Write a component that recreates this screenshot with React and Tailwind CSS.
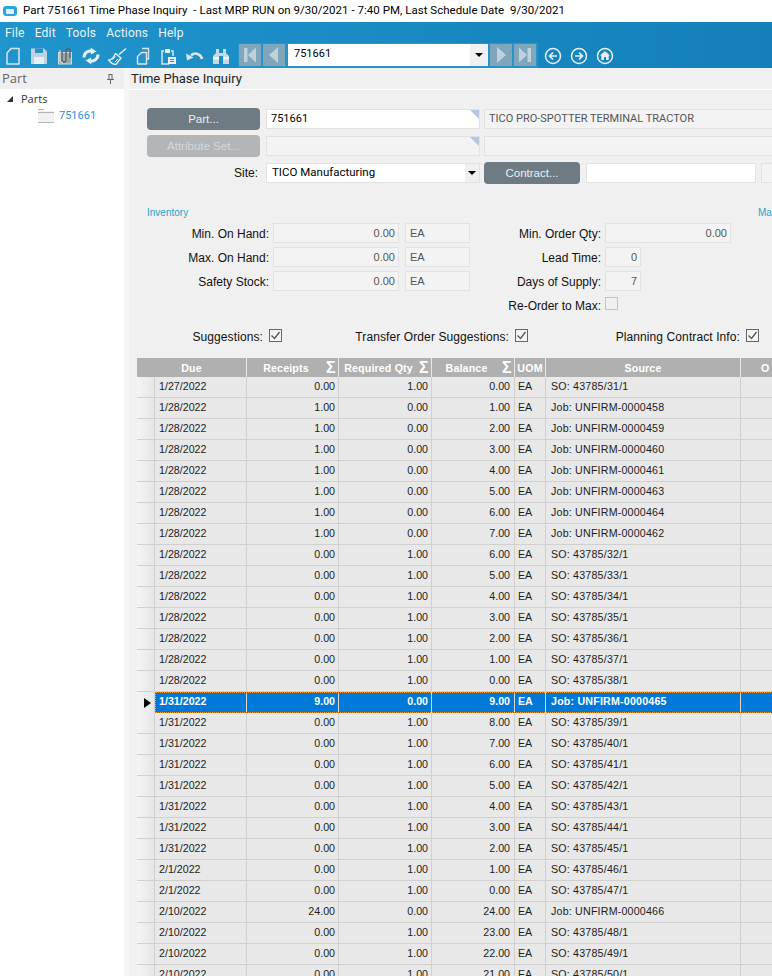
import React from "react";

const SANS = "font-['Liberation_Sans',Arial,sans-serif]";
const UI = "font-['Open_Sans','Noto_Sans',sans-serif]";
const RB = "font-['Roboto','Noto_Sans',sans-serif]";

const rows = [
  ["1/27/2022","0.00","1.00","0.00","SO: 43785/31/1"],
  ["1/28/2022","1.00","0.00","1.00","Job: UNFIRM-0000458"],
  ["1/28/2022","1.00","0.00","2.00","Job: UNFIRM-0000459"],
  ["1/28/2022","1.00","0.00","3.00","Job: UNFIRM-0000460"],
  ["1/28/2022","1.00","0.00","4.00","Job: UNFIRM-0000461"],
  ["1/28/2022","1.00","0.00","5.00","Job: UNFIRM-0000463"],
  ["1/28/2022","1.00","0.00","6.00","Job: UNFIRM-0000464"],
  ["1/28/2022","1.00","0.00","7.00","Job: UNFIRM-0000462"],
  ["1/28/2022","0.00","1.00","6.00","SO: 43785/32/1"],
  ["1/28/2022","0.00","1.00","5.00","SO: 43785/33/1"],
  ["1/28/2022","0.00","1.00","4.00","SO: 43785/34/1"],
  ["1/28/2022","0.00","1.00","3.00","SO: 43785/35/1"],
  ["1/28/2022","0.00","1.00","2.00","SO: 43785/36/1"],
  ["1/28/2022","0.00","1.00","1.00","SO: 43785/37/1"],
  ["1/28/2022","0.00","1.00","0.00","SO: 43785/38/1"],
  ["1/31/2022","9.00","0.00","9.00","Job: UNFIRM-0000465"],
  ["1/31/2022","0.00","1.00","8.00","SO: 43785/39/1"],
  ["1/31/2022","0.00","1.00","7.00","SO: 43785/40/1"],
  ["1/31/2022","0.00","1.00","6.00","SO: 43785/41/1"],
  ["1/31/2022","0.00","1.00","5.00","SO: 43785/42/1"],
  ["1/31/2022","0.00","1.00","4.00","SO: 43785/43/1"],
  ["1/31/2022","0.00","1.00","3.00","SO: 43785/44/1"],
  ["1/31/2022","0.00","1.00","2.00","SO: 43785/45/1"],
  ["2/1/2022","0.00","1.00","1.00","SO: 43785/46/1"],
  ["2/1/2022","0.00","1.00","0.00","SO: 43785/47/1"],
  ["2/10/2022","24.00","0.00","24.00","Job: UNFIRM-0000466"],
  ["2/10/2022","0.00","1.00","23.00","SO: 43785/48/1"],
  ["2/10/2022","0.00","1.00","22.00","SO: 43785/49/1"],
  ["2/10/2022","0.00","1.00","21.00","SO: 43785/50/1"],
];

function Ic({ children, w = 18, h = 18, className = "" }) {
  return (
    <svg width={w} height={h} viewBox={`0 0 ${w} ${h}`} className={"block shrink-0 " + className}>
      {children}
    </svg>
  );
}

const LINE = "#d5e5ee";
const toolIcons = [
  <Ic key="n" w={26}><path d="M11 1.500h8v15.500H7V6z" fill="none" stroke={LINE} strokeWidth="1.5" strokeLinejoin="round"/></Ic>,
  <Ic key="s" w={26}><path d="M5 1.500h13l3 3V17H5z" fill="#bdd3df"/><rect x="9" y="1.500" width="8" height="4.500" fill="#2a92c6"/><rect x="8" y="10" width="10" height="7" fill="#e7eff4"/></Ic>,
  <Ic key="a" w={26}><rect x="6.500" y="5.500" width="13" height="11.500" fill="#9ea6a6" stroke="#d0dadd"/><path d="M10 4v9a2 2 0 0 0 4 0V3.500a2 2 0 0 1 4 0V11" fill="none" stroke="#55626a" strokeWidth="1.300"/><path d="M8 3v10a3 3 0 0 0 3 3" fill="none" stroke="#dfe6ea" strokeWidth="1"/></Ic>,
  <Ic key="r" w={26}><path d="M6 10.500a6.500 6.500 0 0 1 9-6" fill="none" stroke="#e6eff4" strokeWidth="3"/><path d="M12.500 .5l6 4-5.500 3z" fill="#e6eff4"/><path d="M20 7.500a6.500 6.500 0 0 1-9 6" fill="none" stroke="#e6eff4" strokeWidth="3"/><path d="M13.500 17.500l-6-4 5.500-3z" fill="#e6eff4"/></Ic>,
  <Ic key="b" w={26}><path d="M22 1.500l-7 6" stroke="#e6eff4" strokeWidth="1.600"/><path d="M11.500 6.500l5.500 4.500-5 6.500c-2 0-5.500-2-7.500-4.500 3 0 5.500-3 7-6.500z" fill="none" stroke="#e6eff4" strokeWidth="1.400" strokeLinejoin="round"/><path d="M8.500 12.500l3-3M11 15l3-3" stroke="#e6eff4" strokeWidth="1"/></Ic>,
  <Ic key="c" w={26}><path d="M12 1.500h6.500V12h-2" fill="none" stroke={LINE} strokeWidth="1.400"/><path d="M11.500 5.500h5v11.500H7.500V9.500z" fill="#2a92c6" stroke={LINE} strokeWidth="1.400" strokeLinejoin="round"/></Ic>,
  <Ic key="p" w={26}><path d="M8 4H6v13h7M17 9V4h-2" fill="none" stroke={LINE} strokeWidth="1.500"/><rect x="9" y="2" width="5" height="4" fill="#e6eff4"/><rect x="12" y="10" width="8" height="7" fill="#e6eff4"/><path d="M14 12.500h4M14 14.500h4" stroke="#2a92c6"/></Ic>,
  <Ic key="u" w={25}><path d="M9 8.500a6.500 6.500 0 0 1 11 3.500" fill="none" stroke="#d8e5ec" strokeWidth="2.600"/><path d="M4 6.500l1 7 6.500-3z" fill="#d8e5ec"/></Ic>,
  <Ic key="f" w={28}><path d="M9 2h3v4h4V2h3v4l3 3v8h-6V9h-4v8H6V9l3-3z" fill="#c8d8e0"/><rect x="6" y="10" width="6" height="2.500" fill="#eef4f7"/><rect x="16" y="10" width="6" height="2.500" fill="#eef4f7"/></Ic>,
];

function NavBtn({ kind }) {
  const G = "#bed1dc";
  const glyph = {
    first: <><rect x="5" y="4" width="3.500" height="14" fill={G}/><path d="M17 3.500v15L9 11z" fill={G}/></>,
    prev: <path d="M15 3v16L6 11z" fill={G}/>,
    next: <path d="M7 3v16l9-8z" fill={G}/>,
    last: <><path d="M5 3.500v15l8-7.500z" fill={G}/><rect x="13.500" y="4" width="3.500" height="14" fill={G}/></>,
  }[kind];
  return (
    <div className="w-[22px] h-[22px] bg-[#7fa6bb] shrink-0">
      <Ic w={22} h={22}>{glyph}</Ic>
    </div>
  );
}

function Circle({ children }) {
  return (
    <Ic w={18} h={18}>
      <circle cx="9" cy="9" r="7.500" fill="none" stroke="#e6f0f5" strokeWidth="1.500"/>
      {children}
    </Ic>
  );
}

function Corner() {
  return <span className="absolute right-0 top-0 w-0 h-0 border-l-[9px] border-l-transparent border-t-[9px] border-t-[#b4c7df]" />;
}

function Box({ className = "", children, align = "left" }) {
  return (
    <div className={`relative h-[20px] border border-[#e2e2e2] bg-[#f3f3f3] text-[#555] flex items-center shrink-0 ${align === "right" ? "justify-end pr-[3px]" : "pl-[4px]"} ${className}`}>
      {children}
    </div>
  );
}

function GreyBtn({ children, disabled, className = "" }) {
  return (
    <div className={`h-[22px] pt-[2px] rounded-[4px] flex items-center justify-center shrink-0 text-[11.500px] ${disabled ? "bg-[#b2b6b9] text-[#d4d7d9]" : "bg-[#6e7b83] text-[#eef0f1]"} ${className}`}>
      {children}
    </div>
  );
}

function Check() {
  return (
    <div className="w-[13px] h-[13px] border border-[#666] bg-[#f3f3f3] shrink-0">
      <svg width="11" height="11" viewBox="0 0 11 11" className="block">
        <path d="M1.500 5.500l3 3 5-6.500" fill="none" stroke="#555" strokeWidth="1.300"/>
      </svg>
    </div>
  );
}

function Row({ label, lw, children }) {
  return (
    <div className="flex items-center h-[20px] mb-[4px]">
      <div style={{ width: lw }} className="text-right text-[12px] pt-[1px] text-[#111] shrink-0 whitespace-nowrap">{label}</div>
      <div className="flex ml-[4px] items-center">{children}</div>
    </div>
  );
}

function HeadCell({ w, children, sigma }) {
  return (
    <div style={{ width: w }} className="shrink-0 h-full border-r border-[#e8e8e8] flex items-center text-white font-bold text-[10.670px] tracking-[0.15px]">
      <div className="flex-1 text-center whitespace-nowrap">{children}</div>
      {sigma && <span className="text-[16px] leading-none mr-[1px] w-[12px] text-center">Σ</span>}
    </div>
  );
}

function GridRow({ r, selected }) {
  const cell = selected
    ? "border-r border-[#d8d8d8] h-full flex items-center shrink-0 pb-[3px]"
    : "border-r border-[#d0d0d0] h-full flex items-center shrink-0 pb-[2px]";
  return (
    <div className={`flex h-[21px] ${selected ? "bg-[#0078d7] text-white font-bold" : "bg-[#e8e8e8] text-[#1c1c1c] border-b border-[#d0d0d0]"}`}>
      <div className="w-[18px] shrink-0 h-full bg-gradient-to-r from-[#f4f4f4] to-[#e6e6e6] border-r border-[#d0d0d0] flex items-center justify-center">
        {selected && (
          <svg width="7" height="10" viewBox="0 0 7 10" className="block ml-[3px]"><path d="M0 0l7 5-7 5z" fill="#000"/></svg>
        )}
      </div>
      <div className={`flex flex-1 h-full ${selected ? "outline-1 outline-dotted outline-[#f39a2e] -outline-offset-1" : ""}`}>
        <div className={`${cell} w-[92px] pl-[4px]`}>{r[0]}</div>
        <div className={`${cell} w-[92px] justify-end pr-[3px]`}>{r[1]}</div>
        <div className={`${cell} w-[93px] justify-end pr-[3px]`}>{r[2]}</div>
        <div className={`${cell} w-[83px] justify-end pr-[4px]`}>{r[3]}</div>
        <div className={`${cell} w-[31px] pl-[3px]`}>EA</div>
        <div className={`${cell} w-[195px] pl-[5px] tracking-[0.2px]`}>{r[4]}</div>
        <div className={`${cell} w-[60px]`}></div>
      </div>
    </div>
  );
}

export default function App() {
  return (
    <div className={`w-[772px] h-[976px] overflow-hidden bg-white flex flex-col ${SANS}`}>
      {/* Title bar */}
      <div className={`h-[22px] shrink-0 flex items-center pl-[3px] text-[11.500px] tracking-[0.03px] text-black whitespace-pre ${RB}`}>
        <span className="w-[14px] h-[10px] rounded-[3px] bg-[#2aa5e0] flex items-center justify-center mr-[6px]">
          <span className="w-[8px] h-[5px] rounded-[1px] bg-[#dff3fc]" />
        </span>
        <span>Part 751661 Time Phase Inquiry  - Last MRP RUN on 9/30/2021 - 7:40 PM, Last Schedule Date  9/30/2021</span>
      </div>

      {/* Blue ribbon */}
      <div className="h-[46px] shrink-0 bg-gradient-to-r from-[#2094cc] to-[#1380ba] flex flex-col">
        <div className={`h-[21px] flex items-center pl-[5px] gap-[10px] text-[12px] tracking-[0.2px] text-[#eaf4f9] ${RB}`}>
          <span>File</span><span>Edit</span><span>Tools</span><span>Actions</span><span>Help</span>
        </div>
        <div className="flex items-center h-[25px]">
          <div className="flex items-center w-[238px]">{toolIcons}</div>
          <div className="h-[25px] w-[300px] bg-[#2893c6] flex items-center pl-[1px] gap-[2px] pb-[2px]">
            <NavBtn kind="first" />
            <NavBtn kind="prev" />
            <div className={`w-[200px] h-[22px] ml-[1px] bg-white flex items-center pl-[6px] text-[11px] text-black ${RB}`}>
              <span className="flex-1">751661</span>
              <span className="w-[18px] h-full bg-[#f0f0f0] flex items-center justify-center">
                <span className="w-0 h-0 border-l-[4px] border-r-[4px] border-t-[4px] border-l-transparent border-r-transparent border-t-black" />
              </span>
            </div>
            <NavBtn kind="next" />
            <NavBtn kind="last" />
          </div>
          <div className="flex items-center ml-[6px] gap-[8px]">
            <Circle><path d="M13 9H6M9 5.500L5.500 9 9 12.500" fill="none" stroke="#e6f0f5" strokeWidth="1.700"/></Circle>
            <Circle><path d="M5 9h7M9 5.500L12.500 9 9 12.500" fill="none" stroke="#e6f0f5" strokeWidth="1.700"/></Circle>
            <Circle><path d="M9 4l5 4.500h-1.300V13H5.300V8.500H4z" fill="#e6f0f5"/><rect x="8" y="10" width="2" height="3" fill="#1a86bf"/></Circle>
          </div>
        </div>
      </div>

      {/* Body */}
      <div className="flex flex-1 min-h-0">
        {/* Left tree panel */}
        <div className="w-[124px] shrink-0 flex flex-col bg-white">
          <div className={`h-[21px] bg-[#efefef] flex items-center pl-[2px] pr-[9px] justify-between text-[13px] text-[#666] ${UI}`}>
            <span>Part</span>
            <svg width="9" height="10" viewBox="0 0 9 10" className="block"><path d="M2.500 .5h4M3 1v4.500M6 1v4.500M1 5.500h7M4.500 6v4" fill="none" stroke="#666" strokeWidth="1"/></svg>
          </div>
          <div className={`flex items-center h-[12px] mt-[4px] pl-[7px] text-[11px] text-[#333] ${UI}`}>
            <svg width="6" height="6" viewBox="0 0 6 6" className="block"><path d="M6 0v6H0z" fill="#333"/></svg>
            <span className="ml-[8px]">Parts</span>
          </div>
          <div className={`flex items-center mt-[3px] pl-[38px] h-[16px] text-[11px] text-[#2a8fe8] ${RB}`}>
            <svg width="16" height="14" viewBox="0 0 16 14" className="block">
              <path d="M0 1h6l1 1h9v12H0z" fill="#f1f1f1"/>
              <path d="M0 .5h6M0 3.500h16M0 13.500h16" stroke="#b5b5b5" strokeWidth="1"/>
            </svg>
            <span className="ml-[5px]">751661</span>
          </div>
        </div>

        {/* Splitter */}
        <div className="w-[5px] shrink-0 bg-[#f5f5f5]" />

        {/* Main */}
        <div className="flex-1 min-w-0 bg-[#f0f0f0] flex flex-col overflow-hidden">
          <div className={`h-[21px] shrink-0 flex items-center pl-[2px] text-[13px] text-[#222] ${RB}`}>Time Phase Inquiry</div>
          <div className="h-[1px] shrink-0 bg-white" />

          {/* Form */}
          <div className="h-[268px] shrink-0 pl-[18px] pt-[18px] text-[12px] w-[800px]">
            <div className="flex items-center h-[22px]">
              <GreyBtn className="w-[113px]">Part...</GreyBtn>
              <Box className="ml-[6px] w-[214px] !bg-white !text-black pt-[1px]"><span className={`text-[11px] ${RB}`}>751661</span><Corner /></Box>
              <Box className="ml-[4px] w-[400px] !text-[#555] pt-[1px]"><span className={`text-[11px] ${RB}`}>TICO PRO-SPOTTER TERMINAL TRACTOR</span></Box>
            </div>
            <div className="flex items-center h-[22px] mt-[5px]">
              <GreyBtn disabled className="w-[113px]">Attribute Set...</GreyBtn>
              <Box className="ml-[6px] w-[214px]"><Corner /></Box>
              <Box className="ml-[4px] w-[400px]" />
            </div>
            <div className="flex items-center h-[22px] mt-[5px]">
              <div className="w-[111px] text-right text-[12px] text-[#111]">Site:</div>
              <Box className="ml-[8px] w-[214px] !bg-white !text-black !pr-0">
                <span className={`flex-1 pl-[1px] text-[11.500px] ${RB}`}>TICO Manufacturing</span>
                <span className="w-[14px] h-full bg-[#f0f0f0] flex items-center justify-center">
                  <span className="w-0 h-0 border-l-[4px] border-r-[4px] border-t-[4px] border-l-transparent border-r-transparent border-t-black" />
                </span>
              </Box>
              <GreyBtn className="ml-[4px] w-[96px]">Contract...</GreyBtn>
              <Box className="ml-[6px] w-[170px] !bg-white" />
              <Box className="ml-[5px] w-[60px]" />
            </div>

            <div className="flex h-[10px] mt-[23px] pt-[1px] text-[10px] leading-[10px] text-[#2aa3cb] w-[625px] justify-between">
              <span>Inventory</span>
              <span className="w-[14px] overflow-hidden">Ma</span>
            </div>

            <div className="flex mt-[6px] text-[11px]">
              <div className="flex flex-col w-[323px]">
                {["Min. On Hand:","Max. On Hand:","Safety Stock:"].map((l) => (
                  <Row key={l} label={l} lw={122}>
                    <Box align="right" className="w-[126px]">0.00</Box>
                    <Box className="ml-[6px] w-[65px]">EA</Box>
                  </Row>
                ))}
              </div>
              <div className="flex flex-col">
                <Row label="Min. Order Qty:" lw={131}><Box align="right" className="w-[126px]">0.00</Box></Row>
                <Row label="Lead Time:" lw={131}><Box align="right" className="w-[36px]">0</Box></Row>
                <Row label="Days of Supply:" lw={131}><Box align="right" className="w-[36px]">7</Box></Row>
                <Row label="Re-Order to Max:" lw={131}>
                  <div className="w-[13px] h-[13px] border border-[#c4c4c4] bg-[#f0f0f0] mb-[3px]" />
                </Row>
              </div>
            </div>

            <div className="flex items-center h-[14px] mt-[11px] text-[12px] text-[#111] tracking-[0.1px] whitespace-nowrap">
              <span className="w-[116px] text-right">Suggestions:</span>
              <span className="ml-[6px] mb-[3px]"><Check /></span>
              <span className="w-[227px] text-right">Transfer Order Suggestions:</span>
              <span className="ml-[6px] mb-[3px]"><Check /></span>
              <span className="w-[212px] text-right">Planning Contract Info:</span>
              <span className="ml-[6px] mb-[3px]"><Check /></span>
            </div>
          </div>

          {/* Grid */}
          <div className="ml-[8px] w-[640px] text-[10.670px]">
            <div className="flex h-[19px] bg-[#b0b0b0]">
              <HeadCell w={110}>Due</HeadCell>
              <HeadCell w={92} sigma>Receipts</HeadCell>
              <HeadCell w={93} sigma>Required Qty</HeadCell>
              <HeadCell w={83} sigma>Balance</HeadCell>
              <HeadCell w={31}>UOM</HeadCell>
              <HeadCell w={195}>Source</HeadCell>
              <div className="flex-1 pl-[20px] flex items-center text-white font-bold text-[10.670px]">O</div>
            </div>
            {rows.map((r, i) => <GridRow key={i} r={r} selected={i === 15} />)}
          </div>
        </div>
      </div>
    </div>
  );
}
